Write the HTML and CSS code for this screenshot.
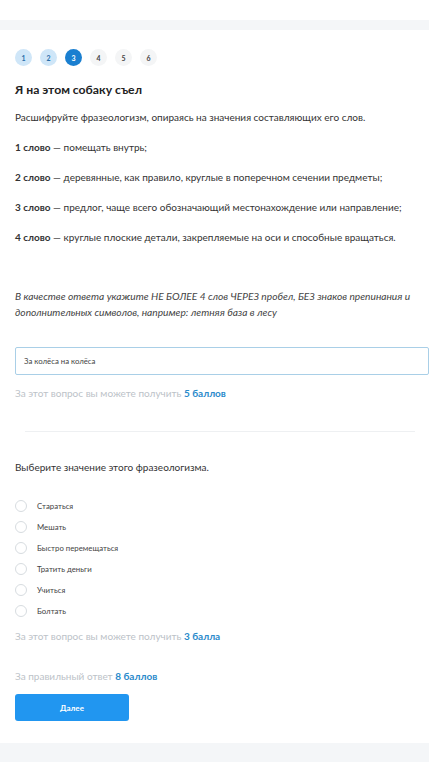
FILE: index.html
```html
<!DOCTYPE html>
<html lang="ru">
<head>
<meta charset="utf-8">
<title>Я на этом собаку съел</title>
<link rel="stylesheet" href="styles.css">
</head>
<body>
<div class="top"></div>
<main class="card">
  <ol class="steps">
    <li class="step done">1</li>
    <li class="step done">2</li>
    <li class="step active">3</li>
    <li class="step">4</li>
    <li class="step">5</li>
    <li class="step">6</li>
  </ol>
  <h1 class="title">Я на этом собаку съел</h1>
  <div class="task">
    <p>Расшифруйте фразеологизм, опираясь на значения составляющих его слов.</p>
    <p><b>1 слово</b> — помещать внутрь;</p>
    <p><b>2 слово</b> — деревянные, как правило, круглые в поперечном сечении предметы;</p>
    <p><b>3 слово</b> — предлог, чаще всего обозначающий местонахождение или направление;</p>
    <p><b>4 слово</b> — круглые плоские детали, закрепляемые на оси и способные вращаться.</p>
  </div>
  <p class="hint">В качестве ответа укажите НЕ БОЛЕЕ 4 слов ЧЕРЕЗ пробел, БЕЗ знаков препинания и дополнительных символов, например: летняя база в лесу</p>
  <input class="answer" type="text" placeholder="За колёса на колёса">
  <p class="points">За этот вопрос вы можете получить <span class="num">5 баллов</span></p>
  <hr class="divider">
  <p class="question">Выберите значение этого фразеологизма.</p>
  <ul class="options">
    <li class="option"><span class="radio"></span>Стараться</li>
    <li class="option"><span class="radio"></span>Мешать</li>
    <li class="option"><span class="radio"></span>Быстро перемещаться</li>
    <li class="option"><span class="radio"></span>Тратить деньги</li>
    <li class="option"><span class="radio"></span>Учиться</li>
    <li class="option"><span class="radio"></span>Болтать</li>
  </ul>
  <p class="points points-2">За этот вопрос вы можете получить <span class="num">3 балла</span></p>
  <p class="points total">За правильный ответ <span class="num">8 баллов</span></p>
  <button class="next" type="button">Далее</button>
</main>
</body>
</html>
```
FILE: styles.css
```css
* { box-sizing: border-box; }
html, body { margin: 0; padding: 0; }
body {
  background: #f4f6f8;
  font-family: Lato, "Noto Sans", sans-serif;
  color: #333;
  min-height: 762px;
}
.top { height: 20px; background: #fff; margin-bottom: 10px; }
.card {
  background: #fff;
  padding: 19px 0 22px 15px;
}
.steps {
  list-style: none;
  margin: 0;
  padding: 0;
  display: flex;
  gap: 8px;
}
.step {
  width: 17px;
  height: 17px;
  border-radius: 50%;
  background: #f4f5f6;
  color: #444;
  font-size: 7px;
  font-weight: 700;
  display: flex;
  align-items: center;
  justify-content: center;
}
.step.done { background: #cfe6f8; color: #2a6ea8; }
.step.active { background: #1a7fd0; color: #fff; }
.title {
  margin: 15px 0 0;
  font-size: 12.2px;
  line-height: 18px;
  font-weight: 700;
  color: #222;
}
.task { margin-top: 10px; }
.task p {
  margin: 0 0 14px;
  font-size: 10px;
  line-height: 16px;
}
.task b { font-weight: 700; }
.hint {
  margin: 43px 0 0;
  padding-right: 10px;
  font-size: 10.2px;
  line-height: 16px;
  font-style: italic;
  color: #444;
}
.answer {
  display: block;
  width: 414px;
  height: 28px;
  margin: 27px 0 0;
  border: 1px solid #a9cfe7;
  border-radius: 2px;
  padding: 0 8px;
  font-family: inherit;
  font-size: 7.8px;
  color: #333;
  outline: none;
}
.answer::placeholder { color: #444; }
.points {
  margin: 10px 0 0;
  font-size: 10px;
  line-height: 16px;
  color: #bcc2c8;
}
.num { color: #2a8acb; font-weight: 700; }
.divider {
  border: 0;
  border-top: 1px solid #eef0f2;
  margin: 30px 14px 0 10px;
}
.question {
  margin: 27px 0 0;
  font-size: 10px;
  line-height: 16px;
  color: #333;
}
.options {
  list-style: none;
  margin: 23px 0 0;
  padding: 0;
  display: flex;
  flex-direction: column;
  gap: 5px;
}
.option {
  display: flex;
  align-items: center;
  gap: 10px;
  height: 16px;
  font-size: 7.8px;
  color: #444;
}
.radio {
  width: 12px;
  height: 12px;
  border-radius: 50%;
  border: 1px solid #d7dce0;
  flex: none;
}
.points-2 { margin-top: 9px; }
.total { margin-top: 24px; }
.next {
  display: block;
  margin-top: 10px;
  width: 114px;
  height: 27px;
  border: 0;
  border-radius: 3px;
  background: #2196f0;
  color: #fff;
  font-family: inherit;
  font-size: 8px;
  font-weight: 700;
}
```
